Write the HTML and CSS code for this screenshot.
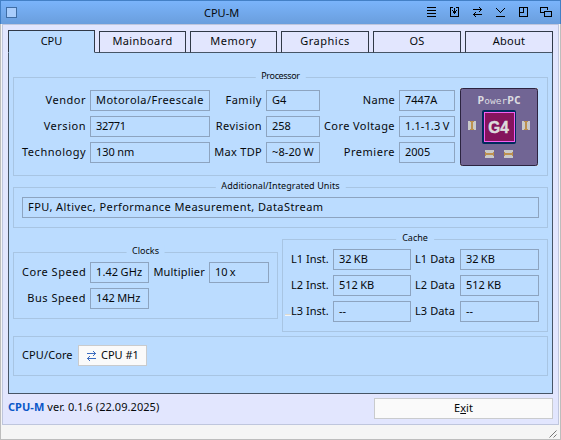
FILE: index.html
```
<!DOCTYPE html>
<html lang="en">
<head>
<meta charset="utf-8">
<title>CPU-M</title>
<link rel="stylesheet" href="styles.css">
</head>
<body>
<div class="window">
  <header class="titlebar">
    <span class="close"></span>
    <span class="title">CPU-M</span>
    <div class="gadgets">
      <svg width="10" height="10"><path d="M0 .5h9M0 3.5h9M0 6.5h9M0 9.5h9"/></svg>
      <svg width="10" height="10"><path d="M3 .5H.5v9h8v-9H6M4.5 1v6M3 4.5h3M2 3.5h1M6 3.5h1M3 5.5h3"/></svg>
      <svg width="10" height="10"><path d="M0 2.5h9M7 1.5h1M6 .5h1M7 3.5h1M6 4.5h1M0 7.5h9M1 6.5h1M2 5.5h1M1 8.5h1M2 9.5h1"/></svg>
      <svg width="10" height="10"><path d="M0 1.5h1M1 2.5h1M2 3.5h1M3 4.5h1M4 5.5h1M5 4.5h1M6 3.5h1M7 2.5h1M8 1.5h1M0 9.5h9"/></svg>
      <svg width="10" height="10"><path d="M.5 .5h8v9h-8zM4.5 .5v5M0 5.5h5"/></svg>
      <svg width="12" height="10"><path d="M4 5.5H.5v-5h7V3M4.5 4.5h7v5h-7z"/></svg>
    </div>
  </header>
  <main class="content">
    <nav class="tabs">
      <div class="tab active">CPU</div>
      <div class="tab s4">Mainboard</div>
      <div class="tab s5">Memory</div>
      <div class="tab s5 wide">Graphics</div>
      <div class="tab s2 wide">OS</div>
      <div class="tab s3 wide">About</div>
    </nav>
    <section class="panel">
      <div class="group processor">
        <span class="legend tight">Processor</span>
        <div class="proc-grid">
          <label class="s5">Vendor</label><div class="field s45">Motorola/Freescale</div>
          <label class="s5">Family</label><div class="field">G4</div>
          <label class="s3">Name</label><div class="field">7447A</div>
          <label class="s5">Version</label><div class="field narrow">32771</div>
          <label class="s4">Revision</label><div class="field">258</div>
          <label class="s4">Core Voltage</label><div class="field s1">1.1-1.3 V</div>
          <label class="s5">Technology</label><div class="field">130 nm</div>
          <label class="s3">Max TDP</label><div class="field s1">~8-20 W</div>
          <label class="s5">Premiere</label><div class="field">2005</div>
        </div>
        <svg class="chip" width="79" height="79" viewBox="0 0 79 79">
          <path fill="#d3d3d2" d="M0 0h4v4H0zM74 0h4v4h-4zM0 74h4v4H0zM74 74h4v4h-4z"/>
          <rect x=".5" y=".5" width="77" height="77" rx="2" fill="#716594" stroke="#2c2440"/>
          <text class="brand" x="17.5" y="16" textLength="43"><tspan class="heavy">P</tspan>ower<tspan class="heavy">PC</tspan></text>
          <rect x="22" y="22" width="34" height="34" rx="2" fill="#002a5c"/>
          <rect x="24.5" y="24.5" width="30" height="29" fill="#85145d" stroke="#f45ff0"/>
          <text class="core" x="28.3" y="45" textLength="20.5" lengthAdjust="spacingAndGlyphs">G4</text>
          <path fill="#c9c9c9" d="M8 33h8v9H8zM62 33h8v9h-8zM25 62h9v8h-9zM44 62h9v8h-9z"/>
          <path fill="#bd914f" d="M10 33h4v1h-1v7h1v1h-4v-1h1v-7h-1zM64 33h4v1h-1v7h1v1h-4v-1h1v-7h-1zM25 64h1v1h7v-1h1v4h-1v-1h-7v1h-1zM44 64h1v1h7v-1h1v4h-1v-1h-7v1h-1z"/>
        </svg>
      </div>
      <div class="group units">
        <span class="legend s1">Additional/Integrated Units</span>
        <div class="field s4">FPU, Altivec, Performance Measurement, DataStream</div>
      </div>
      <div class="middle">
        <div class="group clocks">
          <span class="legend">Clocks</span>
          <div class="clock-grid">
            <label class="s5">Core Speed</label><div class="field s1">1.42 GHz</div>
            <label class="s2">Multiplier</label><div class="field">10 x</div>
            <label class="s5">Bus Speed</label><div class="field">142 MHz</div>
          </div>
        </div>
        <div class="group cache">
          <span class="legend">Cache</span>
          <div class="cache-grid">
            <label>L1 Inst.</label><div class="field">32 KB</div>
            <label class="s1">L1 Data</label><div class="field">32 KB</div>
            <label>L2 Inst.</label><div class="field">512 KB</div>
            <label class="s1">L2 Data</label><div class="field">512 KB</div>
            <label>L3 Inst.</label><div class="field">--</div>
            <label class="s1">L3 Data</label><div class="field">--</div>
          </div>
          <span class="cursor"></span>
        </div>
      </div>
      <div class="group core-select">
        <label class="s1">CPU/Core</label>
        <button class="cycle"><svg width="10" height="10"><path d="M0 2.5h9M7 1.5h1M6 .5h1M7 3.5h1M6 4.5h1M0 7.5h9M1 6.5h1M2 5.5h1M1 8.5h1M2 9.5h1"/></svg>CPU #1</button>
      </div>
    </section>
    <footer class="bottom">
      <div class="version"><b>CPU-M</b> ver. 0.1.6 (22.09.2025)</div>
      <button class="exit">E<u>x</u>it</button>
    </footer>
  </main>
  <div class="status">
    <svg width="8" height="8"><path d="M.5 7.5l7-7M4.5 7.5l3-3"/></svg>
  </div>
</div>
</body>
</html>
```
FILE: styles.css
```
* { box-sizing: border-box; }
body {
  margin: 0;
  font: 11px/17px "Noto Sans", sans-serif;
  color: #06090c;
}
svg { display: block; flex: none; }
.s1 { letter-spacing: .1px; }
.s2 { letter-spacing: .2px; }
.s3 { letter-spacing: .3px; }
.s4 { letter-spacing: .42px; }
.s45 { letter-spacing: .46px; }
.s5 { letter-spacing: .52px; }
.narrow { letter-spacing: -.35px; }

.window {
  width: 561px;
  height: 440px;
  display: flex;
  flex-direction: column;
  background: #f5f5f5;
  border: solid #bdbdbd;
  border-width: 0 1px 1px;
}
.titlebar {
  height: 24px;
  margin: 0 -1px;
  padding: 0 8px 1px 5px;
  display: flex;
  align-items: center;
  border: solid #4380c6;
  border-width: 1px 1px 0;
  background: linear-gradient(#7ab4fb, #6a9edd);
}
.close {
  width: 11px;
  height: 11px;
  margin-top: 1px;
  border: 1px solid #3f6da5;
  background: #a9cdfc;
}
.title { flex: 1; padding-left: 187px; line-height: 21px; }
.gadgets { display: flex; gap: 13px; }
.gadgets svg:last-child { margin-left: -2px; }
.gadgets svg, .cycle svg, .status svg { fill: none; stroke: #000; shape-rendering: crispEdges; }

.content {
  margin: 0 1px;
  height: 401px;
  padding: 5px 5px 0;
  border: 1px solid #bfc6dd;
  background: #e2e6fe;
}
.tabs { display: flex; align-items: flex-end; gap: 4px; height: 23px; }
.tab {
  position: relative;
  width: 87px;
  height: 22px;
  border: 1px solid #303947;
  border-bottom-color: #465566;
  text-align: center;
  line-height: 17px;
}
.tab.wide { width: 88px; }
.tab.active {
  height: 23px;
  border-bottom-color: #bbdcff;
  background: #bbdcff;
  line-height: 19px;
  z-index: 1;
}
.panel {
  width: 545px;
  height: 342px;
  margin-top: -1px;
  padding: 24px 4px 0;
  border: 1px solid #465566;
  background: #bbdcff;
}
.group { position: relative; border: 1px solid #a8c5e3; padding: 9px 8px; }
.legend {
  position: absolute;
  top: -8px;
  left: 50%;
  transform: translateX(-50%);
  padding: 0 6px;
  background: #bbdcff;
  font-size: 9px;
  line-height: 12px;
  white-space: nowrap;
}
.legend.tight { letter-spacing: -.35px; }
.field {
  height: 21px;
  padding-left: 5px;
  border: 1px solid #8da4c0;
  white-space: nowrap;
}
.proc-grid .field, .clock-grid .field, .cache-grid .field { word-spacing: -.6px; }
label { line-height: 19px; white-space: nowrap; }

.processor { height: 99px; padding-top: 12px; display: flex; gap: 5px; }
.proc-grid {
  display: grid;
  grid-template-columns: 68px 120px 56px 54px 79px 56px;
  grid-auto-rows: 21px;
  gap: 5px 0;
  width: 433px;
}
.proc-grid label, .clock-grid label { text-align: right; padding-right: 4px; }
.chip { margin-top: -2px; }
.brand { font: 9.5px "DejaVu Sans Mono", monospace; fill: #dcdce0; }
.heavy { font-weight: bold; font-size: 11px; }
.core {
  font: bold 17px "Liberation Sans", sans-serif;
  fill: #dcdcdc;
  stroke: #dcdcdc;
  stroke-width: .5px;
}

.units { height: 41px; margin-top: 11px; }
.middle { display: flex; align-items: flex-start; gap: 4px; margin-top: 11px; }
.clocks { width: 265px; height: 67px; margin-top: 13px; }
.clock-grid {
  display: grid;
  grid-template-columns: 68px 59px 60px 60px;
  grid-auto-rows: 21px;
  gap: 5px 0;
}
.cache { width: 266px; height: 93px; }
.cache-grid {
  display: grid;
  grid-template-columns: 42px 78px 49px 79px;
  grid-auto-rows: 21px;
  gap: 5px 0;
}
.cache-grid label:nth-of-type(even) { padding-left: 4px; }
.cursor {
  position: absolute;
  left: 2px;
  top: 74px;
  width: 6px;
  height: 2px;
  border-top: 1px solid #dcd9cf;
  background: #f2f5f8;
}
.core-select { height: 40px; margin-top: 4px; padding: 8px; display: flex; gap: 4px; }
.core-select label { width: 52px; }
button {
  height: 21px;
  padding: 0 0 2px;
  border: 1px solid #c9cbcd;
  background: #fafafa;
  color: #06090c;
  font: 11px/17px "Noto Sans", sans-serif;
}
.cycle { width: 69px; padding-left: 8px; display: flex; align-items: center; gap: 4px; }
.cycle svg { stroke: #3c6cc0; margin-top: 2px; }
.bottom { display: flex; justify-content: space-between; width: 545px; margin-top: 4px; }
.version { letter-spacing: .05px; }
.version b { color: #0957c8; }
.exit { width: 179px; }
.status { flex: 1; display: flex; justify-content: flex-end; padding: 5px 3px 0; }
.status svg { stroke: #777; shape-rendering: auto; }
```
